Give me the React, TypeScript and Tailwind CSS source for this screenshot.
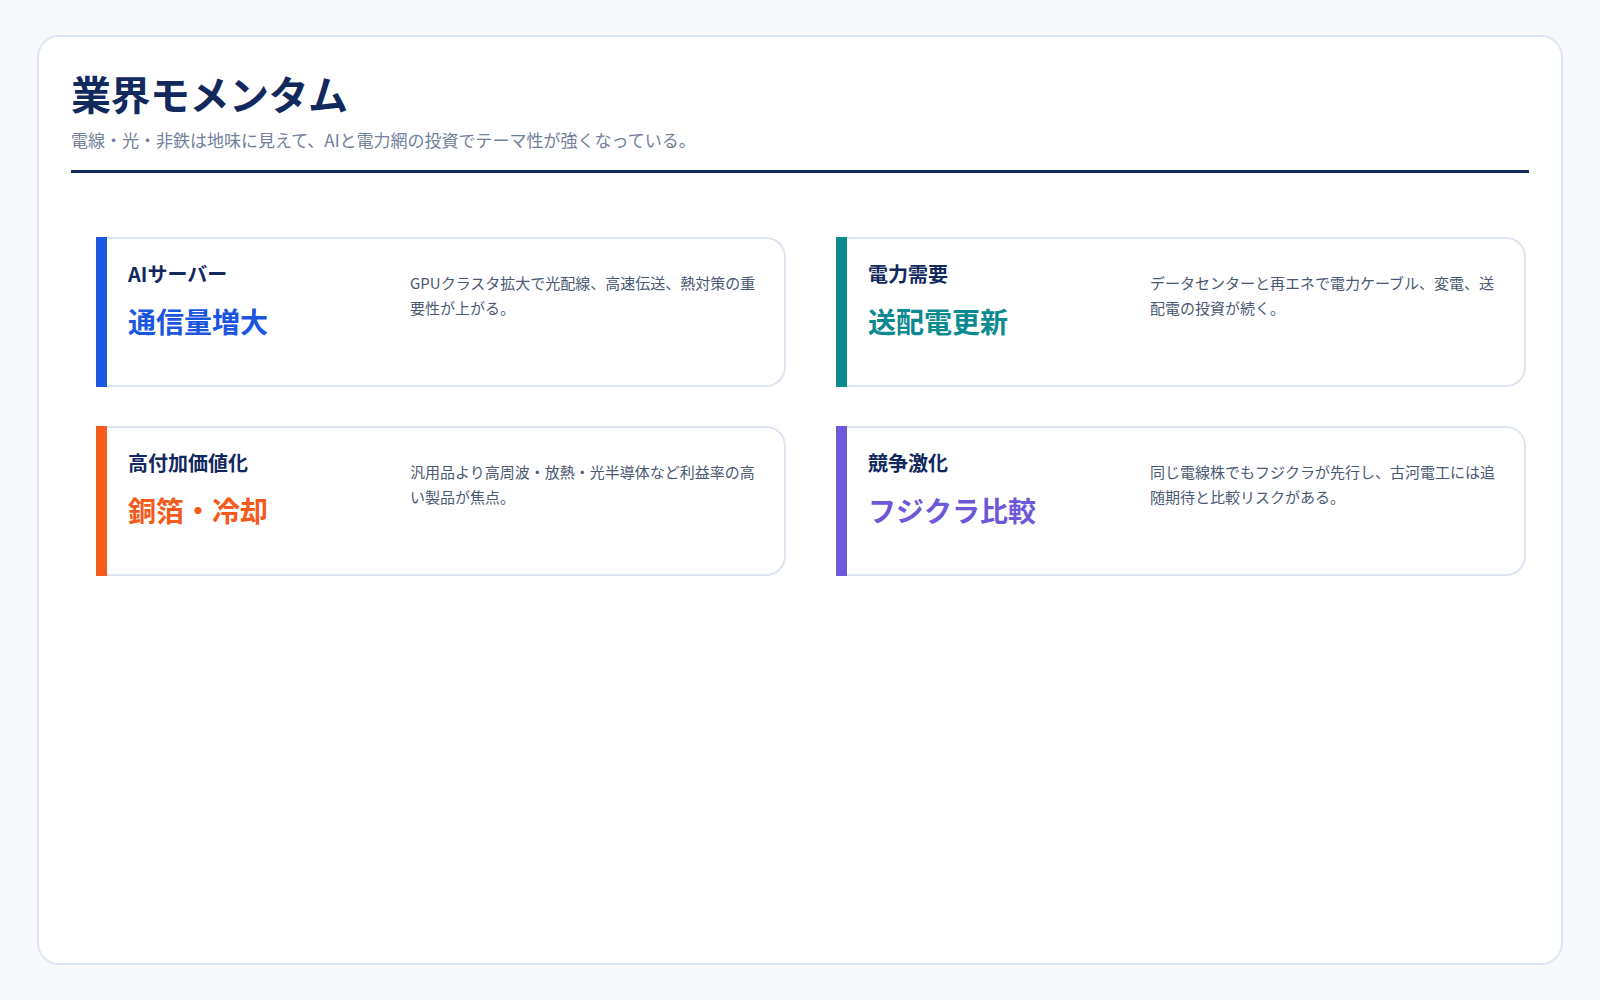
const cards = [
  { label: "AIサーバー", big: "通信量増大", desc: "GPUクラスタ拡大で光配線、高速伝送、熱対策の重要性が上がる。", bar: "bg-[#1a56e0]", text: "text-[#1a56e0]" },
  { label: "電力需要", big: "送配電更新", desc: "データセンターと再エネで電力ケーブル、変電、送配電の投資が続く。", bar: "bg-[#0b8a8f]", text: "text-[#0b8a8f]" },
  { label: "高付加価値化", big: "銅箔・冷却", desc: "汎用品より高周波・放熱・光半導体など利益率の高い製品が焦点。", bar: "bg-[#f45a1c]", text: "text-[#f45a1c]" },
  { label: "競争激化", big: "フジクラ比較", desc: "同じ電線株でもフジクラが先行し、古河電工には追随期待と比較リスクがある。", bar: "bg-[#6e58d8]", text: "text-[#6e58d8]" },
];

export default function App() {
  return (
    <div className="w-[1600px] h-[1000px] bg-[#f6f8fb] pt-[35px] pl-[37px]" style={{ fontFamily: '"Noto Sans CJK JP", "Noto Sans", sans-serif' }}>
      <div className="w-[1526px] h-[930px] bg-white border-2 border-[#dde5f0] rounded-[22px] px-[32px] pt-[28px]">
        <h1 className="text-[40px] font-bold text-[#12295e] leading-[56px] tracking-[-0.5px]">業界モメンタム</h1>
        <p className="text-[17px] text-[#72809a] mt-[6px] leading-[26px]">電線・光・非鉄は地味に見えて、AIと電力網の投資でテーマ性が強くなっている。</p>
        <div className="h-[3px] bg-[#12295e] mt-[17px]" />
        <div className="grid grid-cols-2 gap-x-[50px] gap-y-[39px] mt-[64px] ml-[25px] mr-[3px]">
          {cards.map((c) => (
            <div key={c.label} className="flex h-[150px]">
              <div className={`w-[11px] ${c.bar}`} />
              <div className="flex-1 flex border-2 border-l-0 border-[#dde5f0] rounded-r-[20px] pl-[21px] pr-[16px]">
                <div className="w-[282px] pt-[20px]">
                  <div className="text-[20px] font-bold text-[#12295e] leading-[30px]">{c.label}</div>
                  <div className={`text-[28px] font-bold ${c.text} leading-[40px] mt-[12px]`}>{c.big}</div>
                </div>
                <div className="flex-1 pt-[31px] text-[15px] leading-[25px] text-[#4b5873]">{c.desc}</div>
              </div>
            </div>
          ))}
        </div>
      </div>
    </div>
  );
}
